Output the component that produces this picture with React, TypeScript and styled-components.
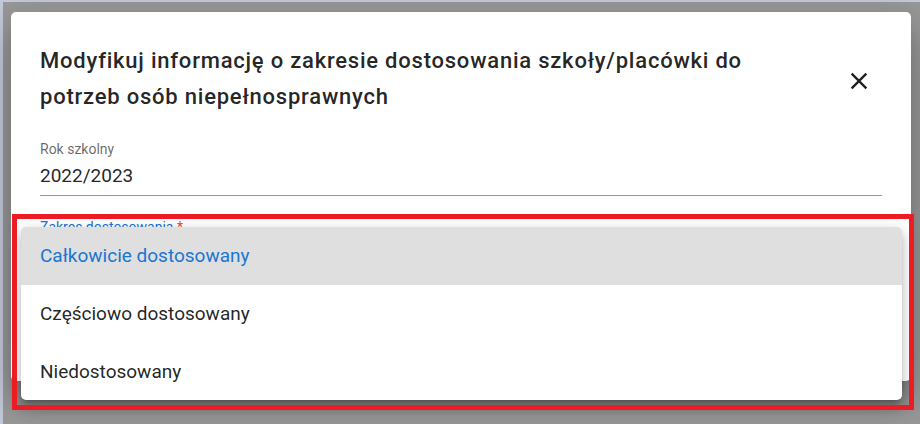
import styled, { createGlobalStyle } from "styled-components";

const GlobalStyle = createGlobalStyle`
  html, body {
    margin: 0;
    padding: 0;
  }
  body {
    font-family: Roboto, "Noto Sans", "Liberation Sans", sans-serif;
    background: #c6cbdc;
  }
`;

const textColor = "rgba(0, 0, 0, 0.87)";
const primary = "#1976d2";

const Page = styled.div`
  position: relative;
  width: 920px;
  height: 424px;
  overflow: hidden;
  box-sizing: border-box;
  padding: 2px 0 0 3px;
  background: #c6cbdc;
`;

const Backdrop = styled.div`
  height: 100%;
  box-sizing: border-box;
  padding: 10px 0 0 8px;
  background: #9a9a9a;
`;

const Dialog = styled.section`
  width: 900px;
  height: 369px;
  box-sizing: border-box;
  padding: 0 29px;
  background: #ffffff;
  border-radius: 5px;
  box-shadow: 0px 11px 15px -7px rgba(0, 0, 0, 0.2),
    0px 24px 38px 3px rgba(0, 0, 0, 0.14), 0px 9px 46px 8px rgba(0, 0, 0, 0.12);
  display: flex;
  flex-direction: column;
`;

const TitleRow = styled.header`
  display: flex;
  justify-content: space-between;
  align-items: flex-start;
  padding-top: 31px;
`;

const Title = styled.h2`
  width: 770px;
  margin: 0;
  font-size: 22px;
  font-weight: 500;
  line-height: 35.5px;
  letter-spacing: 0.78px;
  color: ${textColor};
`;

const CloseButton = styled.button`
  width: 40px;
  height: 40px;
  margin: 18px 3px 0 0;
  padding: 0;
  border: none;
  background: transparent;
  display: flex;
  align-items: center;
  justify-content: center;
  color: #1f1f24;
  cursor: pointer;
`;

const Field = styled.div<{ $gap: number }>`
  display: flex;
  flex-direction: column;
  margin-top: ${(p) => p.$gap}px;
`;

const FieldLabel = styled.label<{ $focused?: boolean }>`
  font-size: 14px;
  line-height: 17px;
  color: ${(p) => (p.$focused ? primary : "rgba(0, 0, 0, 0.6)")};
`;

const Required = styled.span`
  color: #e64a2e;
`;

const FieldValue = styled.div<{ $focused?: boolean }>`
  margin-top: 6px;
  padding-bottom: 8px;
  min-height: 23px;
  font-size: 19px;
  line-height: 23px;
  color: ${textColor};
  border-bottom: ${(p) =>
    p.$focused ? `2px solid ${primary}` : "1px solid rgba(0, 0, 0, 0.42)"};
`;

const Menu = styled.ul`
  position: absolute;
  left: 21px;
  top: 227px;
  width: 881px;
  margin: 0;
  padding: 0;
  list-style: none;
  background: #ffffff;
  border-radius: 5px;
  overflow: hidden;
  box-shadow: 0px 5px 5px -3px rgba(0, 0, 0, 0.2),
    0px 8px 10px 1px rgba(0, 0, 0, 0.14), 0px 3px 14px 2px rgba(0, 0, 0, 0.12);
`;

const MenuItem = styled.li<{ $selected?: boolean }>`
  height: 57.67px;
  box-sizing: border-box;
  padding: 0 19px;
  display: flex;
  align-items: center;
  font-size: 19px;
  line-height: 23px;
  color: ${(p) => (p.$selected ? primary : textColor)};
  background: ${(p) => (p.$selected ? "#dfdfdf" : "transparent")};
`;

const Highlight = styled.div`
  position: absolute;
  left: 12px;
  top: 214px;
  width: 902px;
  height: 196px;
  box-sizing: border-box;
  border: 5px solid #ed1c24;
  pointer-events: none;
`;

const options = [
  "Całkowicie dostosowany",
  "Częściowo dostosowany",
  "Niedostosowany",
];

function CloseIcon() {
  return (
    <svg width="28" height="28" viewBox="0 0 24 24" fill="currentColor">
      <path d="M19 6.41 17.59 5 12 10.59 6.41 5 5 6.41 10.59 12 5 17.59 6.41 19 12 13.41 17.59 19 19 17.59 13.41 12z" />
    </svg>
  );
}

export default function App() {
  return (
    <Page>
      <GlobalStyle />
      <Backdrop>
        <Dialog>
          <TitleRow>
            <Title>
              Modyfikuj informację o zakresie dostosowania szkoły/placówki do
              potrzeb osób niepełnosprawnych
            </Title>
            <CloseButton aria-label="Zamknij">
              <CloseIcon />
            </CloseButton>
          </TitleRow>

          <Field $gap={27}>
            <FieldLabel>Rok szkolny</FieldLabel>
            <FieldValue>2022/2023</FieldValue>
          </Field>

          <Field $gap={23}>
            <FieldLabel $focused>
              Zakres dostosowania <Required>*</Required>
            </FieldLabel>
            <FieldValue $focused>Całkowicie dostosowany</FieldValue>
          </Field>
        </Dialog>
      </Backdrop>

      <Menu role="listbox">
        {options.map((o, i) => (
          <MenuItem key={o} $selected={i === 0}>
            {o}
          </MenuItem>
        ))}
      </Menu>

      <Highlight />
    </Page>
  );
}
